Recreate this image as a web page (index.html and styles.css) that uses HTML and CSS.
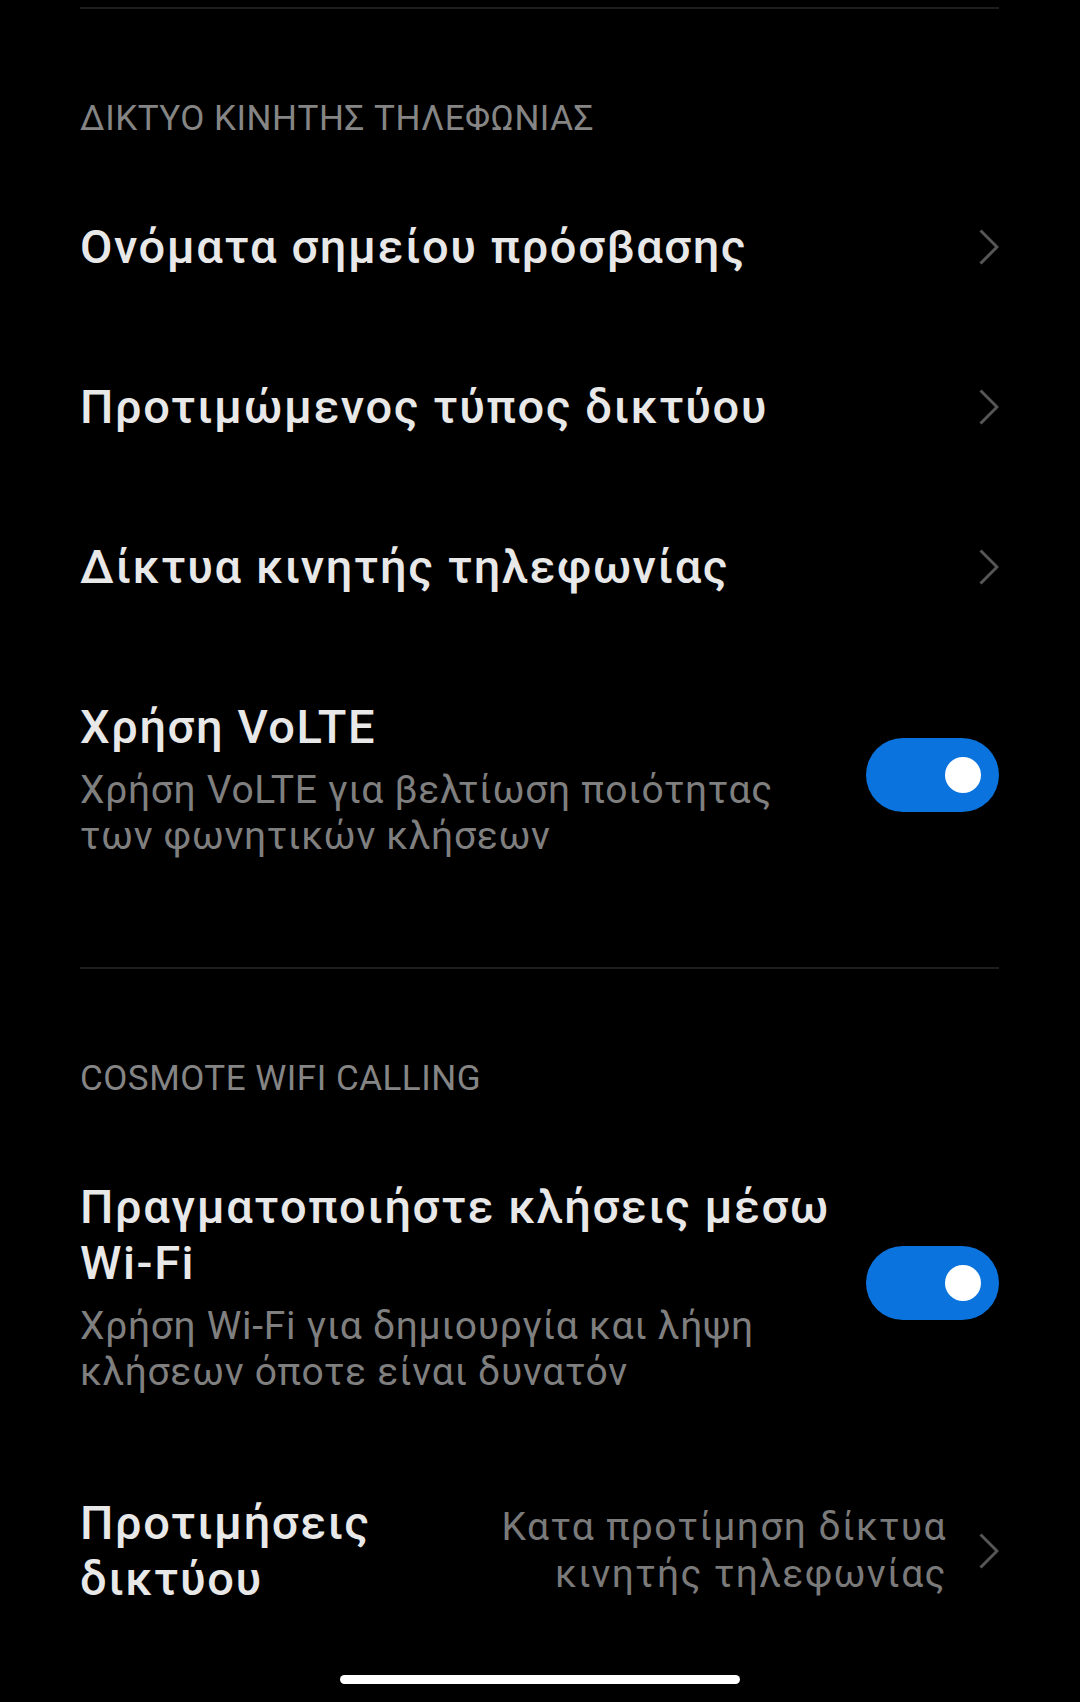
FILE: index.html
```html
<!DOCTYPE html>
<html lang="el">
<head>
  <meta charset="UTF-8" />
  <meta name="viewport" content="width=device-width, initial-scale=1.0"/>
  <title>Κάρτα SIM</title>
  <link rel="stylesheet" href="styles.css">
</head>
<body>
  <div class="screen">
    <div class="divider"></div>
    <div class="section-title">ΔΙΚΤΥΟ ΚΙΝΗΤΗΣ ΤΗΛΕΦΩΝΙΑΣ</div>

    <div class="row">
      <div class="row-text">
        <div class="row-title">Ονόματα σημείου πρόσβασης</div>
      </div>
      <svg class="chevron" viewBox="0 0 20 36"><polyline points="1.5,1.5 18,18 1.5,34.5" /></svg>
    </div>

    <div class="row">
      <div class="row-text">
        <div class="row-title">Προτιμώμενος τύπος δικτύου</div>
      </div>
      <svg class="chevron" viewBox="0 0 20 36"><polyline points="1.5,1.5 18,18 1.5,34.5" /></svg>
    </div>

    <div class="row">
      <div class="row-text">
        <div class="row-title">Δίκτυα κινητής τηλεφωνίας</div>
      </div>
      <svg class="chevron" viewBox="0 0 20 36"><polyline points="1.5,1.5 18,18 1.5,34.5" /></svg>
    </div>

    <div class="row">
      <div class="row-text">
        <div class="row-title">Χρήση VoLTE</div>
        <div class="row-summary">Χρήση VoLTE για βελτίωση ποιότητας<br>των φωνητικών κλήσεων</div>
      </div>
      <div class="switch on"><span class="knob"></span></div>
    </div>

    <div class="divider gap"></div>
    <div class="section-title">COSMOTE WIFI CALLING</div>

    <div class="row">
      <div class="row-text">
        <div class="row-title">Πραγματοποιήστε κλήσεις μέσω<br>Wi-Fi</div>
        <div class="row-summary">Χρήση Wi-Fi για δημιουργία και λήψη<br>κλήσεων όποτε είναι δυνατόν</div>
      </div>
      <div class="switch on"><span class="knob"></span></div>
    </div>

    <div class="row last">
      <div class="row-text">
        <div class="row-title">Προτιμήσεις<br>δικτύου</div>
      </div>
      <div class="row-value">Κατα προτίμηση δίκτυα<br>κινητής τηλεφωνίας</div>
      <svg class="chevron" viewBox="0 0 20 36"><polyline points="1.5,1.5 18,18 1.5,34.5" /></svg>
    </div>
  </div>

  <div class="home-bar"></div>
</body>
</html>
```

FILE: styles.css
```css
body {
  background-color: #000;
  color: #e8e8e8;
  font-family: Roboto, "Noto Sans", sans-serif;
  margin: 0;
  padding: 0;
}
.screen {
  padding: 7px 81px 0 80px;
}
.divider {
  height: 2px;
  background-color: #1e1e1e;
}
.divider.gap {
  margin-top: 56px;
}
.section-title {
  padding: 90px 0 28px;
  font-size: 35px;
  line-height: 40px;
  letter-spacing: 0.5px;
  color: #858585;
}
.row {
  display: flex;
  align-items: center;
  padding: 52px 0;
}
.row.last {
  padding-top: 48px;
}
.row-text {
  flex: 1;
}
.row-title {
  font-size: 47px;
  line-height: 56px;
  font-weight: 500;
  letter-spacing: 1.6px;
  color: #e8e8e8;
}
.row-summary {
  margin-top: 12px;
  font-size: 39px;
  line-height: 46px;
  letter-spacing: 0.7px;
  color: #7f7f7f;
}
.row-value {
  font-size: 39px;
  line-height: 47px;
  letter-spacing: 1.4px;
  color: #7a7a7a;
  text-align: right;
  margin-right: 32px;
}
.chevron {
  width: 20px;
  height: 36px;
  fill: none;
  stroke: #565656;
  stroke-width: 3;
}
.switch {
  width: 133px;
  height: 74px;
  margin-bottom: 8px;
  border-radius: 37px;
  background-color: #0b73dd;
  display: flex;
  align-items: center;
  justify-content: flex-end;
  padding-right: 18px;
  box-sizing: border-box;
}
.knob {
  width: 36px;
  height: 36px;
  border-radius: 50%;
  background-color: #fff;
}
.home-bar {
  position: fixed;
  left: 340px;
  bottom: 18px;
  width: 400px;
  height: 9px;
  border-radius: 5px;
  background-color: #fff;
}
```
